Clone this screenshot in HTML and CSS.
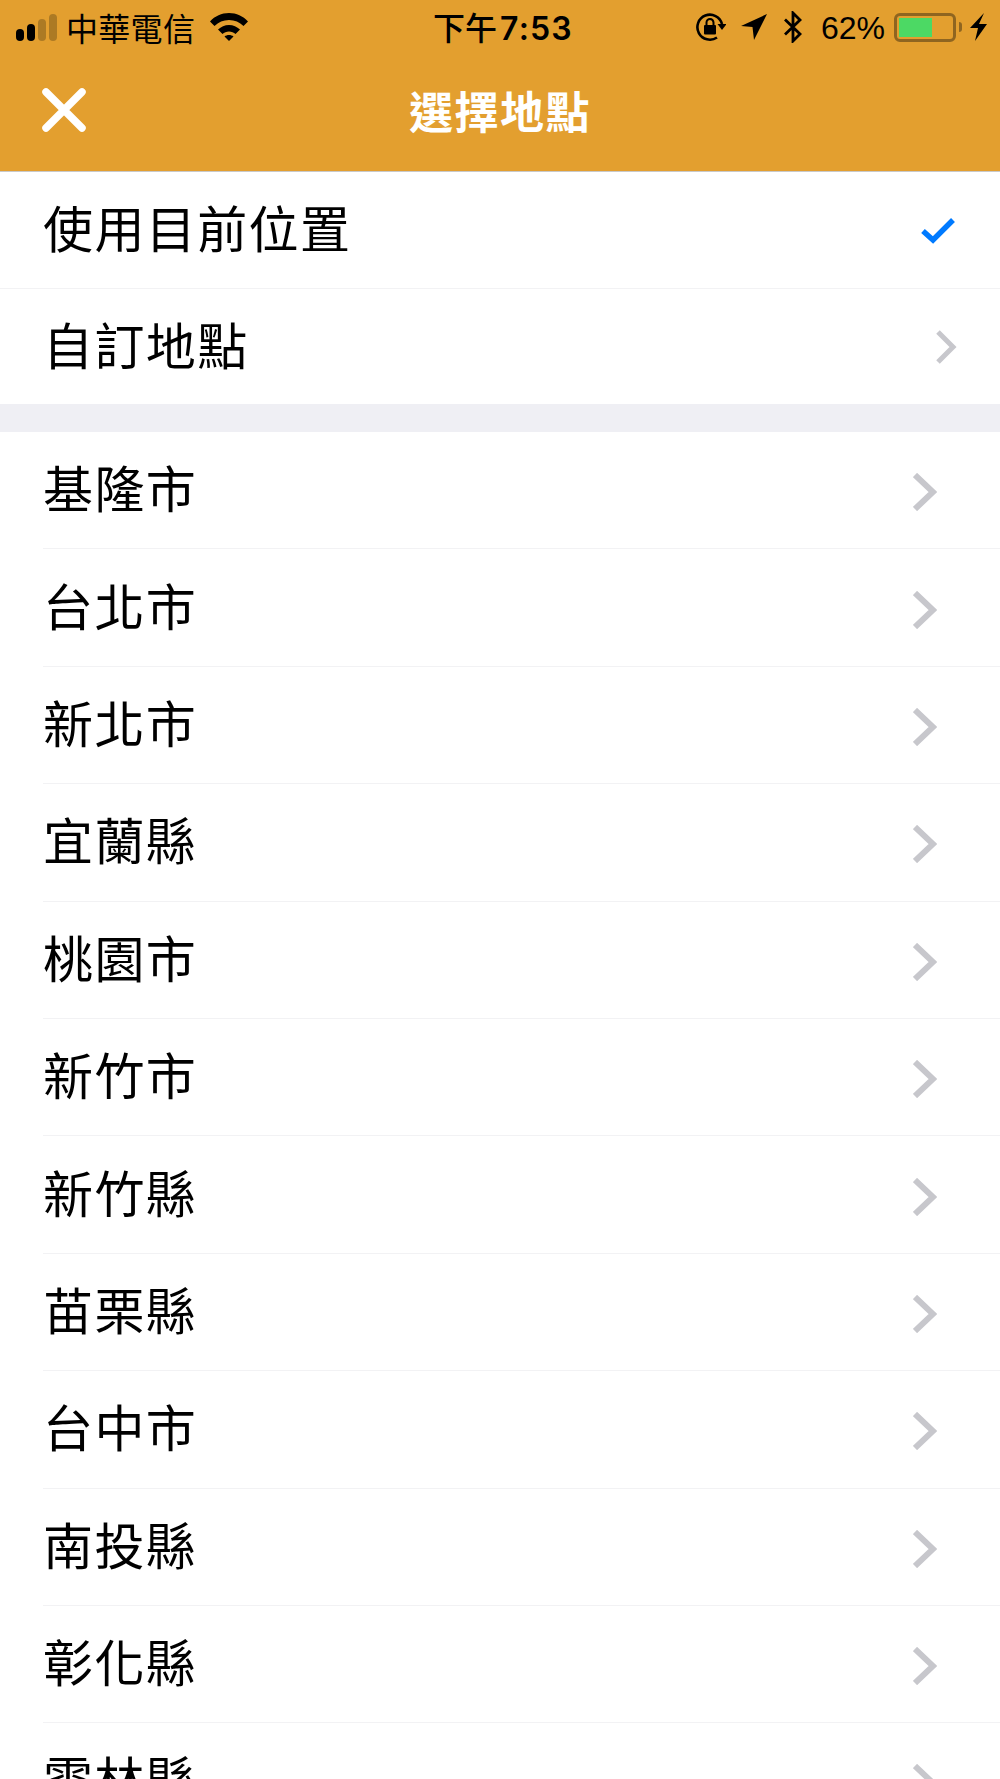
FILE: index.html
```html
<!DOCTYPE html>
<html lang="zh-Hant">
<head>
<meta charset="utf-8">
<title>選擇地點</title>
<link rel="stylesheet" href="styles.css">
</head>
<body>
<div class="page">
<header class="header">
  <div class="status">
    <div class="status-left">
      <div class="signal"><i class="bar b1"></i><i class="bar b2"></i><i class="bar b3"></i><i class="bar b4"></i></div>
      <span class="carrier">中華電信</span>
      <svg class="wifi" viewBox="0 0 38 28"><path d="M0 8.500C5 3 11.500 0 19 0s14 3 19 8.500l-4.500 4.500C29.500 9.200 24.800 7 19 7S8.500 9.200 4.500 13z"/><path d="M8 16.500C11 13.800 14.800 12 19 12s8 1.800 11 4.500l-4.500 4.500C23.800 19.500 21.500 18.500 19 18.500s-4.800 1-6.500 2.500z"/><path d="M14.500 23.500c1.300-1 2.800-1.500 4.500-1.500s3.200.5 4.500 1.500L19 28z"/></svg>
    </div>
    <div class="time"><span class="time-cjk">下午</span>7:53</div>
    <div class="status-right">
      <svg class="lock" viewBox="0 0 30 30"><path d="M21 25.500A12.500 12.500 0 1 1 26 12" fill="none" stroke="#000" stroke-width="2.600"/><path d="M21.500 12h9l-4.500 6z"/><rect x="8" y="13" width="12" height="9.500" rx="1"/><path d="M10.500 13v-2.500a3.500 3.500 0 0 1 7 0V13" fill="none" stroke="#000" stroke-width="2"/></svg>
      <svg class="arrow" viewBox="0 0 26 26"><path d="M26 0L13 26l-1.500-13L0 12z"/></svg>
      <svg class="bt" viewBox="0 0 20 32"><path d="M2 8.500l15 14.500-7 7V2l7 7L2 23.500" fill="none" stroke="#000" stroke-width="2.800"/></svg>
      <span class="percent">62%</span>
      <div class="battery"><div class="cell"><div class="level"></div></div><i class="nub"></i></div>
      <svg class="bolt" viewBox="0 0 18 28"><path d="M14 0L0 15h8L5 28l12-17H9z"/></svg>
    </div>
  </div>
  <div class="nav">
    <svg class="close" viewBox="0 0 44 44"><path d="M4 4l36 36M40 4L4 40" fill="none" stroke="#fff" stroke-width="7.500" stroke-linecap="round"/></svg>
    <h1 class="title">選擇地點</h1>
    <span></span>
  </div>
</header>
<main>
  <section class="group top">
    <div class="row wide first"><span class="label">使用目前位置</span>
      <svg class="check" viewBox="0 0 34 27"><path d="M2 14l10 9L32 3" fill="none" stroke="#007aff" stroke-width="5.500"/></svg></div>
    <div class="row wide"><span class="label">自訂地點</span>
      <svg class="chev small" viewBox="0 0 21 34"><path d="M2 2l15 15L2 32" fill="none" stroke="#c7c7cc" stroke-width="5"/></svg></div>
  </section>
  <section class="group cities">
    <div class="row"><span class="label">基隆市</span><svg class="chev" viewBox="0 0 24 38"><path d="M2 2l18 17L2 36" fill="none" stroke="#c7c7cc" stroke-width="6"/></svg></div>
    <div class="row"><span class="label">台北市</span><svg class="chev" viewBox="0 0 24 38"><path d="M2 2l18 17L2 36" fill="none" stroke="#c7c7cc" stroke-width="6"/></svg></div>
    <div class="row"><span class="label">新北市</span><svg class="chev" viewBox="0 0 24 38"><path d="M2 2l18 17L2 36" fill="none" stroke="#c7c7cc" stroke-width="6"/></svg></div>
    <div class="row"><span class="label">宜蘭縣</span><svg class="chev" viewBox="0 0 24 38"><path d="M2 2l18 17L2 36" fill="none" stroke="#c7c7cc" stroke-width="6"/></svg></div>
    <div class="row"><span class="label">桃園市</span><svg class="chev" viewBox="0 0 24 38"><path d="M2 2l18 17L2 36" fill="none" stroke="#c7c7cc" stroke-width="6"/></svg></div>
    <div class="row"><span class="label">新竹市</span><svg class="chev" viewBox="0 0 24 38"><path d="M2 2l18 17L2 36" fill="none" stroke="#c7c7cc" stroke-width="6"/></svg></div>
    <div class="row"><span class="label">新竹縣</span><svg class="chev" viewBox="0 0 24 38"><path d="M2 2l18 17L2 36" fill="none" stroke="#c7c7cc" stroke-width="6"/></svg></div>
    <div class="row"><span class="label">苗栗縣</span><svg class="chev" viewBox="0 0 24 38"><path d="M2 2l18 17L2 36" fill="none" stroke="#c7c7cc" stroke-width="6"/></svg></div>
    <div class="row"><span class="label">台中市</span><svg class="chev" viewBox="0 0 24 38"><path d="M2 2l18 17L2 36" fill="none" stroke="#c7c7cc" stroke-width="6"/></svg></div>
    <div class="row"><span class="label">南投縣</span><svg class="chev" viewBox="0 0 24 38"><path d="M2 2l18 17L2 36" fill="none" stroke="#c7c7cc" stroke-width="6"/></svg></div>
    <div class="row"><span class="label">彰化縣</span><svg class="chev" viewBox="0 0 24 38"><path d="M2 2l18 17L2 36" fill="none" stroke="#c7c7cc" stroke-width="6"/></svg></div>
    <div class="row"><span class="label">雲林縣</span><svg class="chev" viewBox="0 0 24 38"><path d="M2 2l18 17L2 36" fill="none" stroke="#c7c7cc" stroke-width="6"/></svg></div>
  </section>
</main>
</div>
</body>
</html>
```
FILE: styles.css
```css
html, body { margin: 0; padding: 0; background: #fff; }
body { font-family: "Noto Sans CJK TC", "Liberation Sans", sans-serif; color: #000; }
.page { width: 1000px; height: 1779px; overflow: hidden; }

.header { background: #e39f2f; height: 171px; border-bottom: 1px solid #c9c9c9; }

.status { display: grid; grid-template-columns: 1fr auto 1fr; height: 54px; align-items: center; }
.status-left { display: flex; align-items: center; padding-left: 16px; }
.signal { display: flex; align-items: flex-end; gap: 3px; height: 27px; flex: none; }
.bar { display: block; width: 8px; border-radius: 4px; background: #000; }
.b1 { height: 12px; }
.b2 { height: 17px; }
.b3 { height: 22px; background: #ac7a24; }
.b4 { height: 27px; background: #ac7a24; }
.carrier { font-size: 32px; line-height: 40px; margin-left: 9px; white-space: nowrap; flex: none; letter-spacing: 0.300px; }
.wifi { width: 38px; height: 28px; margin-left: 15px; flex: none; }
.time { font-size: 32px; line-height: 40px; font-family: Inter, "Liberation Sans", sans-serif; font-weight: 600; letter-spacing: 1.200px; white-space: nowrap; margin-left: 6px; }
.time-cjk { font-family: "Noto Sans CJK TC", sans-serif; font-weight: 500; letter-spacing: 0; margin-right: 3px; }
.status-right { display: flex; align-items: center; justify-content: flex-end; padding-right: 12px; }
.lock { width: 30px; height: 30px; }
.arrow { width: 26px; height: 26px; margin-left: 15px; }
.bt { width: 20px; height: 32px; margin-left: 16px; }
.percent { font-family: "Liberation Sans", sans-serif; font-size: 32px; line-height: 40px; margin-left: 18px; margin-top: 2px; }
.battery { display: flex; align-items: center; margin-left: 9px; }
.cell { box-sizing: border-box; width: 62px; height: 29px; border: 3px solid #8f6520; border-radius: 6px; padding: 2px; }
.level { width: 33px; height: 100%; background: #4cd964; }
.nub { display: block; width: 3px; height: 10px; margin-left: 3px; background: #8f6520; border-radius: 0 3px 3px 0; }
.bolt { width: 18px; height: 28px; margin-left: 8px; }

.nav { display: grid; grid-template-columns: 1fr auto 1fr; align-items: center; height: 117px; padding-bottom: 6px; box-sizing: border-box; }
.close { width: 44px; height: 44px; margin-left: 42px; }
.title { margin: 0; font-size: 44px; line-height: 56px; font-weight: 700; color: #fff; letter-spacing: 1.500px; }

.group.top { border-bottom: 28px solid #efeff4; }
.row { display: flex; align-items: center; justify-content: space-between; box-sizing: border-box; height: 117.400px; margin-left: 43px; padding-right: 63px; border-bottom: 1px solid #f2f2f4; }
.row.wide { margin-left: 0; padding-left: 43px; height: 115px; padding-right: 45px; }
.row.wide.first { height: 117px; }
.row.wide:last-child { border-bottom: 0; }
.label { font-size: 50px; line-height: 70px; letter-spacing: 1.400px; margin-bottom: 8px; }
.check { width: 34px; height: 27px; }
.chev { width: 24px; height: 38px; margin-top: 4px; }
.chev.small { width: 21px; height: 34px; margin-top: 0; margin-right: -2px; }
```
